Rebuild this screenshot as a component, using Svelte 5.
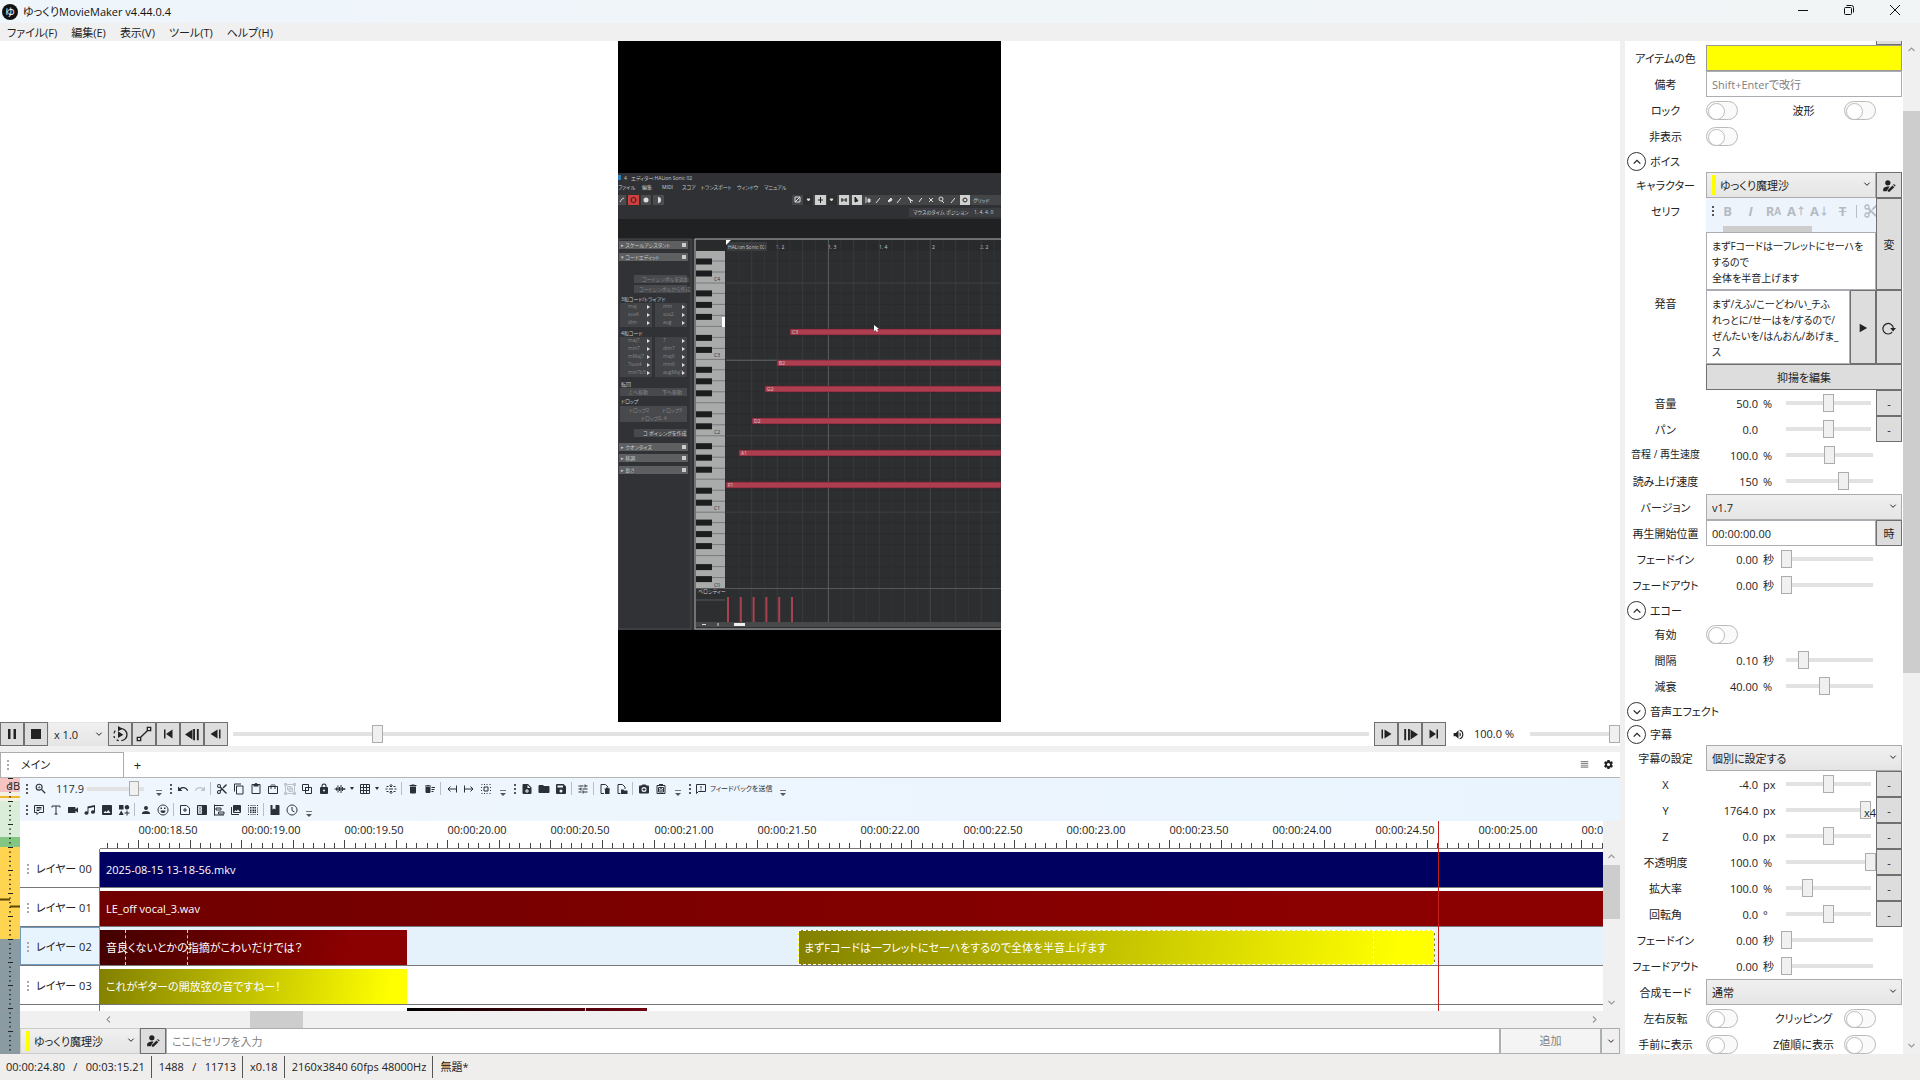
<script>
  const menus = ["ファイル(F)", "編集(E)", "表示(V)", "ツール(T)", "ヘルプ(H)"];

  // f: filled outline, s: stroked lines, both on a 24 unit grid
  const icons = {
    pause: { f: "M4 2h5v20H4zM15 2h5v20h-5z" },
    stop: { f: "M2 2h20v20H2z" },
    loop: {
      f: "M9 8l8 5-8 5zM9 0l7 4-7 4z",
      s: "M13 4a9 9 0 0 1 1 18M10 22a9 9 0 0 1-3-1.500M4 18a9 9 0 0 1-1-3M3 11a9 9 0 0 1 2-4",
    },
    path: { s: "M2 17h5v5H2zM17 2h5v5h-5zM7 17L17 7" },
    toStart: { f: "M4 3h3v18H4zM21 3v18L8 12z" },
    stepBack: { f: "M0 12l12-8v16zM13 3h3v18h-3zM19 3h3v18h-3z" },
    back: { f: "M1 12l14-9v18zM18 3h3v18h-3z" },
    forward: { f: "M23 12L9 3v18zM3 3h3v18H3z" },
    stepForward: { f: "M24 12l-12-8v16zM8 3h3v18H8zM2 3h3v18H2z" },
    toEnd: { f: "M17 3h3v18h-3zM3 3v18l13-9z" },
    volume: {
      f: "M3 9v6h4l5 5V4L7 9zm13.500 3A4.500 4.500 0 0 0 14 7.970v8.050A4.500 4.500 0 0 0 16.500 12zM14 3.230v2.060a7 7 0 0 1 0 13.420v2.060a9 9 0 0 0 0-17.540z",
    },
    play: { f: "M4 2v20l18-10z" },
    reload: { f: "M14 12h10l-5 6z", s: "M17.500 19a9 9 0 1 1 2-7" },
    person: {
      f: "M12 12a4 4 0 1 0 0-8 4 4 0 0 0 0 8zm0 2c-2.670 0-8 1.340-8 4v2h16v-2c0-2.660-5.330-4-8-4z",
    },
    editPerson: {
      f: "M10 11a4.500 4.500 0 1 0 0-9 4.500 4.500 0 0 0 0 9zM13 13c-4-1-11 .500-11 5v3h6zM10 22v-3l8-8 3 3-8 8zM19 10l1.500-1.500 3 3L22 13z",
    },
    gear: {
      f: "M12 15.500A3.500 3.500 0 1 1 12 8.500a3.500 3.500 0 0 1 0 7m7.430-2.530c.04-.32.07-.64.07-.97s-.03-.66-.07-1l2.110-1.630c.19-.15.24-.42.12-.64l-2-3.460c-.12-.22-.39-.31-.61-.22l-2.490 1c-.52-.39-1.060-.73-1.690-.98l-.37-2.650A.506.506 0 0 0 14 2h-4c-.25 0-.46.18-.5.42l-.37 2.650c-.63.25-1.170.59-1.690.98l-2.490-1c-.22-.09-.49 0-.61.22l-2 3.460c-.13.22-.07.49.12.64L4.570 11c-.04.34-.07.67-.07 1s.03.65.07.97l-2.110 1.660c-.19.15-.25.42-.12.64l2 3.460c.12.22.39.3.61.22l2.490-1.010c.52.4 1.060.74 1.690.99l.37 2.650c.04.24.25.42.5.42h4c.25 0 .46-.18.5-.42l.37-2.650c.63-.26 1.170-.59 1.690-.99l2.490 1.010c.22.08.49 0 .61-.22l2-3.460c.12-.22.07-.49-.12-.64z",
    },
    lines: { s: "M2 4h20M2 9h20M2 14h20M2 19h20" },
    zoom: {
      f: "M15.500 14h-.79l-.28-.27A6.470 6.470 0 0 0 16 9.500 6.500 6.500 0 1 0 9.500 16c1.610 0 3.090-.59 4.230-1.570l.27.28v.79l6 6L21.500 20zm-6 0a4.500 4.500 0 1 1 0-9 4.500 4.500 0 0 1 0 9zM12 10h-2v2H9v-2H7V9h2V7h1v2h2z",
    },
    undo: {
      f: "M12.500 8c-2.650 0-5.050.99-6.900 2.600L2 7v9h9l-3.620-3.620c1.390-1.160 3.160-1.880 5.120-1.880 3.540 0 6.550 2.310 7.600 5.500l2.370-.78C21.080 11.030 17.150 8 12.500 8z",
    },
    redo: {
      f: "M18.400 10.600C16.550 8.990 14.150 8 11.500 8c-4.650 0-8.580 3.030-9.960 7.220L3.900 16c1.050-3.190 4.050-5.500 7.600-5.500 1.950 0 3.730.72 5.120 1.880L13 16h9V7z",
    },
    cut: {
      f: "M9.640 7.640c.23-.5.36-1.050.36-1.640a4 4 0 1 0-4 4c.59 0 1.140-.13 1.640-.36L10 12l-2.360 2.360A4 4 0 1 0 10 18c0-.59-.13-1.140-.36-1.640L12 14l7 7h3v-1zM6 8a2 2 0 1 1 0-4 2 2 0 0 1 0 4zm0 12a2 2 0 1 1 0-4 2 2 0 0 1 0 4zM19 3l-6 6 2 2 7-7V3z",
    },
    copy: {
      f: "M16 1H4a2 2 0 0 0-2 2v14h2V3h12zm3 4H8a2 2 0 0 0-2 2v14a2 2 0 0 0 2 2h11a2 2 0 0 0 2-2V7a2 2 0 0 0-2-2zm0 16H8V7h11z",
    },
    paste: {
      f: "M19 2h-4.180a3 3 0 0 0-5.640 0H5a2 2 0 0 0-2 2v16a2 2 0 0 0 2 2h14a2 2 0 0 0 2-2V4a2 2 0 0 0-2-2zm0 18H5V4h2v3h10V4h2z",
    },
    pasteAttr: { s: "M3 7h18v14H3zM8 12V5l2-2 2 2 2-2 2 2v7M8 7h8" },
    group: { s: "M3 3h18v18H3zM1 1h4v4H1zM19 1h4v4h-4zM1 19h4v4H1zM19 19h4v4h-4zM7 7h7v7H7zM10 10h7v7h-7z" },
    ungroup: { s: "M3 3h12v12H3zM9 9h12v12H9zM9 9h6v6H9z" },
    lock: {
      f: "M18 8h-1V6A5 5 0 0 0 7 6v2H6a2 2 0 0 0-2 2v10a2 2 0 0 0 2 2h12a2 2 0 0 0 2-2V10a2 2 0 0 0-2-2zm-6 9a2 2 0 1 0 0-4 2 2 0 0 0 0 4zM9 8V6a3 3 0 0 1 6 0v2z",
    },
    wave: { s: "M1 12h22M5 9v6M8 5v14M11 8v8M14 4v16M17 8v8M20 10v4" },
    grid: { s: "M3 3h18v18H3zM9 3v18M15 3v18M3 9h18M3 15h18" },
    distribute: { s: "M12 2v5M9 5l3 3 3-3M12 22v-5M9 19l3-3 3 3M1 12h4M8 12h8M19 12h4M3 7h4M17 7h4M3 17h4M17 17h4" },
    trash: { f: "M6 19a2 2 0 0 0 2 2h8a2 2 0 0 0 2-2V7H6zM19 4h-3.500l-1-1h-5l-1 1H5v2h14z" },
    trashList: {
      f: "M15 16h4v2h-4zM15 8h7v2h-7zM15 12h6v2h-6zM3 18a2 2 0 0 0 2 2h6a2 2 0 0 0 2-2V8H3zM14 5h-3l-1-1H6L5 5H2v2h12z",
    },
    alignLeft: { s: "M21 12H4M9 7l-5 5 5 5M21 5v14" },
    alignRight: { s: "M3 12h17M15 7l5 5-5 5M3 5v14" },
    select: { s: "M8 8h8v8H8zM3 3h2M8 3h2M13 3h2M19 3h2M3 21h2M8 21h2M13 21h2M19 21h2M3 8v2M3 14v2M21 8v2M21 14v2" },
    fileAdd: { f: "M14 2H5a2 2 0 0 0-2 2v16a2 2 0 0 0 2 2h14a2 2 0 0 0 2-2V9zM13 4l6 6h-6zM11 12h2v3h3v2h-3v3h-2v-3H8v-2h3z" },
    folder: { f: "M10 4H3a2 2 0 0 0-2 2v12a2 2 0 0 0 2 2h18a2 2 0 0 0 2-2V8a2 2 0 0 0-2-2h-9z" },
    save: { f: "M17 2H4a2 2 0 0 0-2 2v16a2 2 0 0 0 2 2h16a2 2 0 0 0 2-2V7zM12 19a3 3 0 1 1 0-6 3 3 0 0 1 0 6zM16 9H5V5h11z" },
    tune: {
      f: "M3 17v2h6v-2zM3 5v2h10V5zm10 16v-2h8v-2h-8v-2h-2v6zM7 9v2H3v2h4v2h2V9zm14 4v-2H11v2zm-6-4h2V7h4V5h-4V3h-2z",
    },
    fileTrash: { f: "M11 11h11v2h-1v9h-9v-9h-1zM14 9h5v2h-5z", s: "M10 21H4V3h9l5 5" },
    fileLock: { f: "M10 13h5l1 2h7v7H10z", s: "M9 21H4V3h9l5 5v4" },
    camera: {
      f: "M9 3L7 5H4a2 2 0 0 0-2 2v12a2 2 0 0 0 2 2h16a2 2 0 0 0 2-2V7a2 2 0 0 0-2-2h-3l-2-2zM12 18a5 5 0 1 1 0-10 5 5 0 0 1 0 10zM11 10h2v2h2v2h-2v2h-2v-2H9v-2h2z",
    },
    cameraPaste: { f: "M8 2h8v4H8z", s: "M4 5h16v16H4zM7 9h10v9H7zM12 11a2.500 2.500 0 1 0 .1 0" },
    feedback: { s: "M3 3h18v14H7l-4 4zM12 6v5M12 13v2" },
    comment: { s: "M3 3h18v14H12l-4 4v-4H3zM7 7h10M7 10h10M7 13h6" },
    textTool: { s: "M4 7V4h16v3M12 4v17M9 20h6" },
    video: { f: "M17 10.500V7a1 1 0 0 0-1-1H3a1 1 0 0 0-1 1v10a1 1 0 0 0 1 1h13a1 1 0 0 0 1-1v-3.500l5 4v-11z" },
    music: { f: "M22 2v14a4 3.500 0 1 1-2-3V6L9 8.500V18a4 3.500 0 1 1-2-3V5z" },
    image: {
      f: "M22 20V4a2 2 0 0 0-2-2H4a2 2 0 0 0-2 2v16a2 2 0 0 0 2 2h16a2 2 0 0 0 2-2zM8.500 13.500l2.500 3 3.500-4.500 4.500 6H5z",
    },
    shapes: { f: "M2 2h9v9H2zM18 2a4.500 4.500 0 1 1-.1 0zM6.500 13l5 9h-10zM17 13h2v4h4v2h-4v4h-2v-4h-4v-2h4z" },
    smile: {
      f: "M7 13h10a5 5 0 0 1-10 0zM7 7h3v3H7zM14 7h3v3h-3z",
      s: "M12 2a10 10 0 1 0 .1 0",
    },
    frameAdd: { s: "M3 3h12l6 5v13H3zM12 8v8M8 12h8" },
    transition: {
      f: "M12 3h9v18h-9z",
      s: "M3 3h18v18H3zM5 6h2M9 6h2M7 9h2M5 12h2M9 12h2M7 15h2M5 18h2M9 18h2",
    },
    layersList: { s: "M3 1v22M3 3h18M6 8h10v4H6zM11 16h11v4H11zM3 22h19" },
    gallery: {
      f: "M22 16V4a2 2 0 0 0-2-2H8a2 2 0 0 0-2 2v12a2 2 0 0 0 2 2h12a2 2 0 0 0 2-2zm-11-4l2 2.700L16 11l4 5H8zM2 6v14a2 2 0 0 0 2 2h14v-2H4V6z",
    },
    dotGrid: {
      f: "M2 2h2v2H2zM7 2h2v2H7zM11 2h2v2h-2zM15 2h2v2h-2zM20 2h2v2h-2zM2 7h2v2H2zM6 6h3v3H6zM11 6h3v3h-3zM15 6h3v3h-3zM20 7h2v2h-2zM2 11h2v2H2zM6 11h3v3H6zM11 11h3v3h-3zM15 11h3v3h-3zM20 11h2v2h-2zM2 15h2v2H2zM6 15h3v3H6zM11 15h3v3h-3zM15 15h3v3h-3zM20 15h2v2h-2zM2 20h2v2H2zM7 20h2v2H7zM11 20h2v2h-2zM15 20h2v2h-2zM20 20h2v2h-2z",
    },
    book: { f: "M3 2h4v9l3-2 3 2V2h6a2 2 0 0 1 2 2v18H3z" },
    clock: { s: "M12 2a10 10 0 1 0 .1 0M12 6v7l5 3" },
    up: { s: "M4 16l8-8 8 8" },
    down: { s: "M4 8l8 8 8-8" },
    left: { s: "M16 4l-8 8 8 8" },
    right: { s: "M8 4l8 8-8 8" },
  };

  const editBar = [
    "grip", "undo", "redo:off", "|", "cut", "copy", "paste", "pasteAttr", "group:off", "ungroup",
    "lock", "wave:menu", "grid:menu", "distribute", "|", "trash", "trashList", "|", "alignLeft",
    "alignRight", "select", "more", "grip", "fileAdd", "folder", "save", "|", "tune", "|",
    "fileTrash", "fileLock", "|", "camera", "cameraPaste", "more", "grip",
  ];
  const itemBar = [
    "grip", "comment", "textTool", "video", "music", "image", "shapes", "|", "person", "smile",
    "|", "frameAdd", "transition", "layersList", "gallery", "dotGrid", "|", "book", "clock", "more",
  ];

  // timeline scale
  const stepWidth = 10.31;
  const firstLabel = 38;
  const ticks = Array.from({ length: 146 }, (_, i) => i - 3).map((k) => ({
    x: Math.round(firstLabel + k * stepWidth) + 0.5,
    major: k % 5 === 0,
    label: k % 10 === 0 ? `00:00:${(18.5 + k / 20).toFixed(2)}` : null,
  }));
  const playhead = 1338;

  const layers = [
    { name: "レイヤー 00", clips: [{ text: "2025-08-15 13-18-56.mkv", kind: "movie", x: 0, w: 4000 }] },
    { name: "レイヤー 01", clips: [{ text: "LE_off vocal_3.wav", kind: "audio", x: 0, w: 4000 }] },
    {
      name: "レイヤー 02",
      current: true,
      clips: [
        { text: "音良くないとかの指摘がこわいだけでは？", kind: "voice", x: 0, w: 307, marks: [25, 87] },
        {
          text: "まずFコードは一フレットにセーハをするので全体を半音上げます",
          kind: "line",
          x: 698,
          w: 637,
          marks: [574],
          picked: true,
        },
      ],
    },
    {
      name: "レイヤー 03",
      clips: [{ text: "これがギターの開放弦の音ですねー！", kind: "line", x: 0, w: 307 }],
    },
    { name: "", clips: [{ text: "", kind: "dark", x: 307, w: 240, marks: [178] }] },
  ];

  const voiceSliders = [
    { label: "音量", value: "50.0", unit: "%", pos: 0.5, key: true },
    { label: "パン", value: "0.0", unit: "", pos: 0.5, key: true },
    { label: "音程 / 再生速度", value: "100.0", unit: "%", pos: 0.5, small: true },
    { label: "読み上げ速度", value: "150", unit: "%", pos: 0.66 },
  ];
  const voiceFades = [
    { label: "フェードイン", value: "0.00", unit: "秒", pos: 0 },
    { label: "フェードアウト", value: "0.00", unit: "秒", pos: 0 },
  ];
  const echoSliders = [
    { label: "間隔", value: "0.10", unit: "秒", pos: 0.2 },
    { label: "減衰", value: "40.00", unit: "%", pos: 0.44 },
  ];
  const captionSliders = [
    { label: "X", value: "-4.0", unit: "px", pos: 0.5, key: true },
    { label: "Y", value: "1764.0", unit: "px", pos: 0.94, key: true, badge: "x4" },
    { label: "Z", value: "0.0", unit: "px", pos: 0.5, key: true },
    { label: "不透明度", value: "100.0", unit: "%", pos: 1, key: true },
    { label: "拡大率", value: "100.0", unit: "%", pos: 0.25, key: true },
    { label: "回転角", value: "0.0", unit: "°", pos: 0.5, key: true },
    { label: "フェードイン", value: "0.00", unit: "秒", pos: 0 },
    { label: "フェードアウト", value: "0.00", unit: "秒", pos: 0 },
  ];

  let serif = $state("まずFコードは一フレットにセーハを\nするので\n全体を半音上げます");
  let reading = $state("まず/えふ/こーどわ/い_チふ\nれっとに/せーはを/するので/\nぜんたいを/はんおん/あげま_\nス");

  // preview frame
  const notes = [
    { x: 790, y: 332, n: "C3" },
    { x: 777, y: 363, n: "B2" },
    { x: 765, y: 389, n: "G2" },
    { x: 752, y: 421, n: "D2" },
    { x: 739, y: 453, n: "A1" },
    { x: 726, y: 485, n: "F1" },
  ];
  const octaves = [283, 359.4, 435.8, 512.2, 588.6];
  const blackKeys = [9.5, 21.5, 42.5, 54.5, 66];
  const chordRows = [
    [307, "maj", "min"], [315, "sus4", "sus2"], [323, "dim", "aug"],
    [341, "maj7", "7"], [349, "min7", "dim7"], [357, "mMaj7", "maj6"],
    [365, "7sus4", "min6"], [373, "min7b5", "augMaj7"],
  ];
  const panelBars = [
    [241, "▸ スケールアシスタント"], [253, "▾ コードエディット"],
    [443, "▸ クオンタイズ"], [454, "▸ 移調"], [466, "▸ 長さ"],
  ];
</script>

{#snippet icon(name, size = 12)}
  <svg class="icon" width={size} height={size} viewBox="0 0 24 24" aria-hidden="true">
    {#if icons[name].f}<path d={icons[name].f} fill="currentColor" fill-rule="evenodd" />{/if}
    {#if icons[name].s}
      <path d={icons[name].s} fill="none" stroke="currentColor" stroke-width={size < 11 ? 3 : 2} />
    {/if}
  </svg>
{/snippet}

{#snippet bar(items)}
  {#each items as item}
    {@const [name, mode] = item.split(":")}
    {#if name === "grip"}
      <span class="grip"></span>
    {:else if name === "|"}
      <span class="sep"></span>
    {:else if name === "more"}
      <button class="more" aria-label="その他"></button>
    {:else}
      <button class="tool" class:menu={mode === "menu"} disabled={mode === "off"} aria-label={name}>
        {@render icon(name)}
      </button>
    {/if}
  {/each}
{/snippet}

{#snippet combo(id, text, color)}
  <span class="combo" class:colored={color}>
    <select {id} aria-label={text}>
      <option>{text}</option>
    </select>
    {@render icon("down", 8)}
  </span>
{/snippet}

{#snippet sliders(rows, prefix)}
  {#each rows as row, i}
    <div class="row">
      <label for={`${prefix}${i}`} class:small={row.small}>{row.label}</label>
      <div class="slider-row" class:keyed={row.key}>
        <span class="value">{row.value}</span>
        <span class="unit">{row.unit}</span>
        <input id={`${prefix}${i}`} type="range" min="0" max="1" step="0.01" value={row.pos} />
        {#if row.badge}<span class="badge">{row.badge}</span>{/if}
        {#if row.key}<button class="btn" aria-label={`${row.label} アニメーション`}>-</button>{/if}
      </div>
    </div>
  {/each}
{/snippet}

{#snippet toggles(id, items)}
  <div class="row double">
    {#each items as item, i}
      <label for={`${id}${i}`}>{item}</label>
      <span class="cell"><input id={`${id}${i}`} class="toggle" type="checkbox" /></span>
    {/each}
  </div>
{/snippet}

{#snippet heading(text, name)}
  <button class="heading"><span class="ring">{@render icon(name, 10)}</span>{text}</button>
{/snippet}

<div class="window">
  <header>
    <div class="title">
      <span class="logo">ゆ</span>
      <h1>ゆっくりMovieMaker v4.44.0.4</h1>
      <div class="caption">
        <button aria-label="最小化"><svg width="10" height="10"><path d="M0 5.5h10" /></svg></button>
        <button aria-label="元に戻す">
          <svg width="10" height="10"><rect x="0.5" y="2.500" width="7" height="7" rx="1" /><path d="M2.500 0.5h5a2 2 0 0 1 2 2v5" /></svg>
        </button>
        <button aria-label="閉じる"><svg width="10" height="10"><path d="M0 0l10 10M10 0L0 10" /></svg></button>
      </div>
    </div>
    <nav>
      {#each menus as menu}
        <button>{menu}</button>
      {/each}
    </nav>
  </header>

  <main>
    <section class="left">
      <div class="preview">
        <svg class="video" viewBox="618 41 383 681" role="img" aria-label="プレビュー">
          <rect x="618" y="41" width="383" height="681" fill="#000" />
          <rect x="618" y="173" width="383" height="457" fill="#2f3134" />
          <rect x="618" y="219" width="383" height="20" fill="#202123" />
          <rect x="618" y="175" width="3" height="5" fill="#2b7fb5" />
          <g class="tiny">
            <text x="624" y="180">4</text>
            <text x="631" y="180">エディター</text>
            <text x="652" y="180">: HALion Sonic 02</text>
            <text x="618" y="189">ファイル</text>
            <text x="642" y="189">編集</text>
            <text x="662" y="189">MIDI</text>
            <text x="682" y="189">スコア</text>
            <text x="701" y="189">トランスポート</text>
            <text x="737" y="189">ウィンドウ</text>
            <text x="764" y="189">マニュアル</text>
          </g>
          <rect x="618" y="195" width="8" height="10" fill="#4a4c4e" />
          <path d="M620 202l2-3 2-1" stroke="#ddd" />
          <rect x="628" y="195" width="11" height="10" fill="#c9403f" />
          <circle cx="633.5" cy="200" r="2.500" fill="none" stroke="#401515" />
          <rect x="641" y="195" width="10" height="10" fill="#4a4c4e" />
          <circle cx="646" cy="200" r="2.500" fill="#ddd" />
          <rect x="653" y="195" width="11" height="10" fill="#4a4c4e" />
          <path d="M658 197a3 3 0 1 1 0 6z" fill="#ddd" />
          <rect x="792" y="195" width="209" height="10" fill="#434547" />
          <rect x="803" y="195" width="10" height="10" fill="#2c2e30" />
          <rect x="827" y="195" width="10" height="10" fill="#2c2e30" />
          <rect x="815" y="195" width="11" height="10" fill="#d0d0d0" />
          <rect x="839" y="195" width="10" height="10" fill="#d0d0d0" />
          <rect x="852" y="195" width="10" height="10" fill="#d0d0d0" />
          <rect x="960" y="195" width="10" height="10" fill="#d0d0d0" />
          <g fill="#ddd" stroke="#ddd">
            <path d="M795 197h5v5h-5zM795 202l5-5" fill="none" />
            <path d="M807 199h3l-1.500 2zM830 199h3l-1.500 2z" />
            <path d="M866 197v6M868 199h2v3h-2zM876 203l4-5M888 201l3-3 1 2-3 2zM897 203l4-5M908 197l2 3 3 1M910 200l1 3M919 202l2-3 1-1M929 198l4 4M933 198l-4 4M955 198l-4 5" />
            <circle cx="941" cy="199" r="2" fill="none" />
            <path d="M942 201l2 2" />
          </g>
          <g fill="#222" stroke="#222">
            <path d="M818 200h5M820.500 197v6M841 200h6M842 198v4M846 198v4" />
            <path d="M855 197v5l2-1h1z" />
            <circle cx="965" cy="200" r="2" fill="none" />
          </g>
          <text class="tiny" x="973" y="202">グリッド</text>
          <rect x="909" y="208" width="92" height="9" fill="#3b3d40" />
          <text class="tiny" x="913" y="214">マウスのタイム ポジション</text>
          <text class="tiny" x="974" y="214">1. 4. 4. 0</text>

          <rect x="618" y="239" width="73" height="390" fill="#303235" stroke="#4b4d50" />
          {#each panelBars as [y, text]}
            <rect x="619" {y} width="69" height="8" fill="#5d5f61" />
            <text class="tiny" x="621" y={y + 6}>{text}</text>
            <rect x="682" y={y + 2} width="4" height="4" fill="#ccc" />
          {/each}
          <g fill="#48494c">
            <rect x="634" y="275" width="53" height="8" />
            <rect x="634" y="285" width="53" height="8" />
            <rect x="620" y="388" width="67" height="8" />
            <rect x="620" y="406" width="67" height="16" />
            <rect x="634" y="429" width="53" height="8" />
          </g>
          {#each chordRows as [y, a, b]}
            <rect x="620" y={y - 4} width="32" height="8" fill="#414346" />
            <rect x="655" y={y - 4} width="32" height="8" fill="#414346" />
            <text class="tiny dim" x="628" y={y + 1}>{a}</text>
            <text class="tiny dim" x="663" y={y + 1}>{b}</text>
            <path d={`M647 ${y - 2}v4l3-2zM682 ${y - 2}v4l3-2z`} fill="#ddd" />
          {/each}
          <g class="tiny">
            <text x="621" y="301">3和コード/トライアド</text>
            <text x="621" y="335">4和コード</text>
            <text x="621" y="386">転回</text>
            <text x="621" y="403">ドロップ</text>
            <text class="dim" x="642" y="281">コードシンボルを追加</text>
            <text class="dim" x="639" y="291">コードシンボルから作成</text>
            <text class="dim" x="628" y="394">上へ移動</text>
            <text class="dim" x="662" y="394">下へ移動</text>
            <text class="dim" x="629" y="412">ドロップ2</text>
            <text class="dim" x="662" y="412">ドロップ3</text>
            <text class="dim" x="641" y="420">ドロップ2, 4</text>
            <text x="643" y="435">コ ボイシングを作成</text>
          </g>

          <rect x="695" y="239" width="310" height="390" fill="#2c2e30" stroke="#b5b5b5" />
          <rect x="696" y="240" width="305" height="11" fill="#282a2c" />
          <rect x="727" y="242" width="40" height="9" fill="#3a3c3e" />
          <path d="M726 240h5l-5 5z" fill="#fff" />
          <g class="tiny">
            <text x="728" y="249">HALion Sonic 02</text>
            <text x="776" y="249">1. 2</text>
            <text x="828" y="249">1. 3</text>
            <text x="879" y="249">1. 4</text>
            <text x="932" y="249">2</text>
            <text x="980" y="249">2. 2</text>
          </g>
          <rect x="696" y="251" width="29" height="337" fill="#a9abaa" />
          {#each octaves as bottom, o}
            <text class="tiny key" x="714" y={bottom - 2}>C{4 - o}</text>
            {#each [0, 11, 22, 33, 44, 55, 66] as step}
              {#if bottom - step > 252}
                <path d={`M696 ${bottom - step}h29`} stroke="#55585a" stroke-width="0.6" />
                <path d={`M726 ${bottom - step}h275`} stroke={step ? "#292b2d" : "#3e4042"} />
              {/if}
            {/each}
            {#each blackKeys as k}
              {#if bottom - k > 252}
                <rect x="696" y={bottom - k - 3} width="16" height="6" fill="#1c1d1e" />
              {/if}
            {/each}
          {/each}
          <rect x="722" y="317" width="3" height="10" fill="#fff" />
          {#each Array(21) as _, i}
            {@const x = 739 + i * 12.75}
            <path d={`M${x} 240V622`} stroke={i % 8 === 7 ? "#505355" : i % 2 ? "#404244" : "#353739"} stroke-width="0.7" />
          {/each}
          <path d="M828.500 240V622" stroke="#606365" stroke-width="0.7" />
          <path d="M726 360.500h51M696 588.500h305M696 600h29" stroke="#55585a" />
          <text class="tiny" x="698" y="593">ベロシティー</text>
          {#each notes as note, i}
            <rect x={note.x} y={note.y - 3} width={1001 - note.x} height="6" fill="#ad3e50" stroke="#5a1c28" stroke-width="0.6" />
            <text class="tiny" x={note.x + 2} y={note.y + 1.5}>{note.n}</text>
            <rect x={791 - i * 12.8} y="597" width="2" height="25" fill="#a9414f" />
          {/each}
          <rect x="696" y="622" width="305" height="5" fill="#46484a" />
          <path d="M702 624.500h4M718 623v3" stroke="#ddd" />
          <rect x="734" y="623" width="11" height="3" fill="#eee" />
          <path d="M874 325v6l1.500-1 1.500 2 1-1-1-2h2z" fill="#fff" />
        </svg>
      </div>

      <div class="transport">
        <button class="btn" aria-label="一時停止">{@render icon("pause")}</button>
        <button class="btn" aria-label="停止">{@render icon("stop")}</button>
        <span class="speed">{@render combo("speed", "x 1.0")}</span>
        <button class="btn" aria-label="ループ">{@render icon("loop", 16)}</button>
        <button class="btn" aria-label="パス">{@render icon("path", 16)}</button>
        <button class="btn" aria-label="先頭">{@render icon("toStart")}</button>
        <button class="btn" aria-label="前へ">{@render icon("stepBack", 15)}</button>
        <button class="btn" aria-label="戻る">{@render icon("back")}</button>
        <input class="seek" type="range" min="0" max="11713" value="1488" aria-label="シーク" />
        <button class="btn" aria-label="進む">{@render icon("forward")}</button>
        <button class="btn" aria-label="次へ">{@render icon("stepForward", 15)}</button>
        <button class="btn" aria-label="末尾">{@render icon("toEnd")}</button>
        <label class="volume" for="volume">{@render icon("volume", 13)}<span>100.0 %</span></label>
        <input id="volume" type="range" min="0" max="100" value="100" />
      </div>

      <div class="tabs">
        <button class="tab"><span class="grip"></span>メイン</button>
        <button class="plain add" aria-label="追加">+</button>
        <button class="plain faint" aria-label="一覧">{@render icon("lines", 9)}</button>
        <button class="plain" aria-label="設定">{@render icon("gear", 11)}</button>
      </div>

      <div class="editor">
        <div class="meter">
          <span class="db">dB</span>
          <svg viewBox="0 0 20 276" preserveAspectRatio="none" aria-hidden="true">
            {#each Array(60) as _, i}
              <path d={i % 5 === 0 ? `M8 ${i * 4.6 + 0.5}h5` : `M9 ${i * 4.6 + 0.5}h2`} stroke="#222" />
            {/each}
            <path d="M0 121.500h10M10 128.500h10" stroke="#5d4700" stroke-width="2" />
          </svg>
        </div>
        <div class="timeline">
          <div class="toolbars">
            <div class="toolbar">
              <span class="grip"></span>
              <label class="zoom" for="zoom">{@render icon("zoom", 13)}<span>117.9</span></label>
              <input id="zoom" type="range" min="0" max="100" value="82" />
              <button class="more" aria-label="その他"></button>
              {@render bar(editBar)}
              <button class="feedback">{@render icon("feedback")}フィードバックを送信</button>
              <button class="more" aria-label="その他"></button>
            </div>
            <div class="toolbar">{@render bar(itemBar)}</div>
          </div>

          <div class="tracks">
            <div class="lanes">
              <svg class="ruler" aria-label="時間">
                {#each ticks as tick}
                  <path d={`M${tick.x} ${tick.major ? 19 : 22}V27`} stroke="#444" />
                  {#if tick.label}<text x={tick.x} y="13">{tick.label}</text>{/if}
                {/each}
              </svg>
              {#each layers as layer}
                <div class="layer" class:current={layer.current}>
                  <div class="name">{#if layer.name}<span class="grip"></span>{layer.name}{/if}</div>
                  <div class="lane">
                    {#each layer.clips as clip}
                      <div class={`clip ${clip.kind}`} class:picked={clip.picked} style={`left:${clip.x}px;width:${clip.w}px`}>
                        {clip.text}
                        {#each clip.marks || [] as mark}
                          <i style={`left:${mark}px`}></i>
                        {/each}
                      </div>
                    {/each}
                  </div>
                </div>
              {/each}
              <div class="playhead" style={`left:${80 + playhead}px`}></div>
            </div>
            <div class="vscroll">
              <button aria-label="上へ">{@render icon("up", 9)}</button>
              <span class="thumb"></span>
              <button aria-label="下へ">{@render icon("down", 9)}</button>
            </div>
          </div>
          <div class="hscroll">
            <button aria-label="左へ">{@render icon("left", 9)}</button>
            <span class="thumb"></span>
            <button aria-label="右へ">{@render icon("right", 9)}</button>
          </div>

          <div class="entry">
            <span class="who">{@render combo("who", "ゆっくり魔理沙", true)}</span>
            <button class="btn" aria-label="キャラクター編集">{@render icon("editPerson", 14)}</button>
            <input type="text" placeholder="ここにセリフを入力" aria-label="セリフ" />
            <button class="submit" disabled>追加</button>
            <button class="drop" aria-label="追加方法">{@render icon("down", 8)}</button>
          </div>
        </div>
      </div>
    </section>

    <aside>
      <form class="props" onsubmit={(e) => e.preventDefault()}>
        <div class="cutoff"><button class="btn" aria-label="色"></button></div>
        <div class="row">
          <span class="label">アイテムの色</span>
          <button class="swatch" aria-label="アイテムの色"></button>
        </div>
        <div class="row">
          <label for="memo">備考</label>
          <input id="memo" type="text" placeholder="Shift+Enterで改行" />
        </div>
        {@render toggles("lock", ["ロック", "波形"])}
        {@render toggles("hide", ["非表示"])}

        {@render heading("ボイス", "up")}
        <div class="row">
          <label for="chara">キャラクター</label>
          <div class="pair">
            {@render combo("chara", "ゆっくり魔理沙", true)}
            <button class="btn" aria-label="キャラクター編集">{@render icon("editPerson", 14)}</button>
          </div>
        </div>
        <div class="row">
          <label for="serif">セリフ</label>
          <div class="pair">
            <div class="serif">
              <div class="format">
                <div class="letters">
                  <span class="grip"></span>
                  <button disabled>B</button>
                  <button disabled><em>I</em></button>
                  <button disabled>R<sub>A</sub></button>
                  <button disabled>A<small>↑</small></button>
                  <button disabled>A<small>↓</small></button>
                  <button disabled><s>T</s></button>
                  <span class="sep"></span>
                  <button disabled aria-label="切り取り">{@render icon("cut", 16)}</button>
                </div>
                <span class="thumb"></span>
              </div>
              <textarea id="serif" rows="3" bind:value={serif}></textarea>
            </div>
            <button class="btn">変</button>
          </div>
        </div>
        <div class="row">
          <label for="reading">発音</label>
          <div class="pair">
            <textarea id="reading" class="reading" rows="4" bind:value={reading}></textarea>
            <button class="btn" aria-label="再生">{@render icon("play", 10)}</button>
            <button class="btn" aria-label="更新">{@render icon("reload", 14)}</button>
          </div>
        </div>
        <div class="row">
          <span></span>
          <button class="btn">抑揚を編集</button>
        </div>
        {@render sliders(voiceSliders, "voice")}
        <div class="row">
          <label for="version">バージョン</label>
          {@render combo("version", "v1.7")}
        </div>
        <div class="row">
          <label for="start">再生開始位置</label>
          <div class="pair">
            <input id="start" type="text" value="00:00:00.00" />
            <button class="btn">時</button>
          </div>
        </div>
        {@render sliders(voiceFades, "vfade")}

        {@render heading("エコー", "up")}
        {@render toggles("echo", ["有効"])}
        {@render sliders(echoSliders, "delay")}

        {@render heading("音声エフェクト", "down")}
        {@render heading("字幕", "up")}
        <div class="row">
          <label for="captions">字幕の設定</label>
          {@render combo("captions", "個別に設定する")}
        </div>
        {@render sliders(captionSliders, "cap")}
        <div class="row">
          <label for="blend">合成モード</label>
          {@render combo("blend", "通常")}
        </div>
        {@render toggles("flip", ["左右反転", "クリッピング"])}
        {@render toggles("front", ["手前に表示", "Z値順に表示"])}
      </form>
      <div class="vscroll side">
        <button aria-label="上へ">{@render icon("up", 9)}</button>
        <span class="thumb"></span>
        <button aria-label="下へ">{@render icon("down", 9)}</button>
      </div>
    </aside>
  </main>

  <footer>
    <span>00:00:24.80&ensp; / &ensp;00:03:15.21</span>
    <span>1488&ensp; / &ensp;11713</span>
    <span>x0.18</span>
    <span>2160x3840 60fps 48000Hz</span>
    <span>無題*</span>
  </footer>
</div>

<style>
  :global(body) {
    margin: 0;
    overflow: hidden;
  }

  .window {
    background: #f0f0f0;
    color: #222;
    display: flex;
    flex-direction: column;
    font-family: "Open Sans", "Noto Sans CJK JP", sans-serif;
    font-feature-settings: "palt";
    font-size: 11px;
    height: 100vh;
    line-height: 16px;
  }

  .window * {
    box-sizing: border-box;
  }

  button,
  input,
  select,
  textarea {
    border: 0;
    border-radius: 0;
    color: inherit;
    font: inherit;
    font-feature-settings: inherit;
    margin: 0;
    min-width: 0;
    outline: 0;
    padding: 0;
  }

  button {
    align-items: center;
    background: none;
    display: flex;
    justify-content: center;
    white-space: nowrap;
  }

  .icon {
    display: block;
    flex: none;
  }

  /* title and menu */
  .title {
    align-items: center;
    background: linear-gradient(90deg, #eef5fb, #f2f5f6);
    display: flex;
    height: 23px;
    padding-left: 2px;
  }

  .logo {
    background: #111;
    border-radius: 50%;
    color: #fff;
    font-size: 10px;
    height: 16px;
    text-align: center;
    width: 16px;
  }

  h1 {
    color: #111;
    flex: 1;
    font-size: 11px;
    font-weight: 400;
    margin: 0 0 0 5px;
  }

  .caption {
    display: flex;
    padding-right: 2px;
  }

  .caption button {
    height: 23px;
    padding-bottom: 3px;
    width: 46px;
  }

  .caption svg {
    fill: none;
    stroke: #111;
  }

  nav {
    display: flex;
    gap: 14px;
    height: 18px;
    padding: 1px 0 0 7px;
  }

  main {
    display: flex;
    flex: 1;
    min-height: 0;
  }

  .left {
    background: #fff;
    display: flex;
    flex: 1;
    flex-direction: column;
    min-width: 0;
  }

  .preview {
    display: flex;
    flex: 1;
    justify-content: center;
    min-height: 0;
    padding-right: 1px;
  }

  .video {
    height: 100%;
  }

  .tiny,
  .tiny text {
    fill: #ccc;
    font-size: 5px;
  }

  .tiny .dim,
  .tiny.dim {
    fill: #85878a;
  }

  .tiny.key {
    fill: #333;
  }

  .btn {
    background: #ddd;
    border: 1px solid #707070;
    color: #222;
    flex: none;
    width: 26px;
  }

  /* slider */
  input[type="range"] {
    appearance: none;
    background: linear-gradient(#e2e2e2, #e2e2e2) no-repeat center / calc(100% - 10px) 4px;
    height: 18px;
  }

  input[type="range"]::-webkit-slider-thumb {
    appearance: none;
    background: #f0f0f0;
    border: 1px solid #acacac;
    height: 18px;
    width: 11px;
  }

  .combo {
    background: linear-gradient(#f0f0f0, #e5e5e5);
    border: 1px solid #acacac;
    display: flex;
    flex: 1;
    min-width: 0;
    position: relative;
  }

  .combo select {
    appearance: none;
    background: none;
    flex: 1;
    padding: 1px 0 0 5px;
  }

  .combo .icon {
    pointer-events: none;
    position: absolute;
    right: 4px;
    top: 7px;
  }

  .combo.colored select {
    padding-left: 13px;
  }

  .combo.colored::before {
    background: #ff0;
    bottom: 2px;
    content: "";
    left: 5px;
    position: absolute;
    top: 2px;
    width: 4px;
  }

  .transport {
    display: flex;
    height: 24px;
  }

  .transport .btn {
    width: 24px;
  }

  .transport input {
    align-self: center;
    width: 95px;
  }

  .transport .seek {
    flex: 1;
  }

  .speed {
    display: flex;
    width: 60px;
  }

  .speed .combo {
    border-color: #e5e5e5;
  }

  .volume {
    align-items: center;
    display: flex;
    gap: 9px;
    padding-left: 6px;
    width: 79px;
  }

  .tabs {
    border-bottom: 1px solid #b5b5b5;
    border-top: 6px solid #f0f0f0;
    display: flex;
    height: 32px;
  }

  .tab {
    border: 1px solid #acacac;
    border-bottom: 0;
    gap: 10px;
    justify-content: flex-start;
    padding-left: 3px;
    width: 124px;
  }

  .plain {
    width: 24px;
  }

  .add {
    font-size: 13px;
    margin-right: auto;
    width: 27px;
  }

  .faint {
    color: #888;
  }

  .grip {
    align-self: center;
    background: radial-gradient(circle, #555 1px, transparent 1px) center / 2px 4px repeat-y;
    flex: none;
    height: 12px;
    width: 7px;
  }

  .tab .grip,
  .name .grip {
    background-image: radial-gradient(circle, #aaa 1px, transparent 1px);
  }

  .editor {
    display: flex;
  }

  .meter {
    background: linear-gradient(
      #f6c3c3 14px,
      #f5f0e4 14px 18px,
      #f0b92c 18px 20px,
      #f5f0e4 20px 23px,
      #d9edd9 23px 59px,
      #83c683 59px 69px,
      #ffd451 69px 161px,
      #8a9ba1 161px
    );
    position: relative;
    width: 20px;
  }

  .meter svg {
    height: 100%;
    position: absolute;
    width: 20px;
  }

  .db {
    position: absolute;
    right: 0;
  }

  .timeline {
    flex: 1;
    min-width: 0;
  }

  .toolbars {
    background: linear-gradient(90deg, #f0f6fd, #e9f4fe);
    padding: 0 0 1px 3px;
  }

  .toolbar {
    color: #2b3036;
    display: flex;
    height: 21px;
  }

  .tool {
    flex: none;
    width: 17px;
  }

  .tool:disabled {
    color: #bcc3ca;
  }

  .tool.menu {
    gap: 4px;
    justify-content: flex-start;
    padding-left: 2px;
    width: 25px;
  }

  .tool.menu::after {
    border: 2px solid transparent;
    border-bottom: 0;
    border-top: 3px solid currentColor;
    content: "";
  }

  .sep {
    align-self: center;
    border-left: 1px solid #b9bfc6;
    flex: none;
    height: 13px;
    margin: 0 2px;
  }

  .more {
    align-items: flex-end;
    flex: none;
    padding-bottom: 3px;
    width: 17px;
  }

  .more::after {
    border: 3px solid transparent;
    border-bottom: 0;
    border-top-color: #555;
    content: "";
  }

  .more::before {
    background: #777;
    content: "";
    height: 1px;
    margin: 0 -6px 5px 0;
    width: 6px;
  }

  .zoom {
    align-items: center;
    display: flex;
    gap: 9px;
    padding-left: 4px;
    width: 52px;
  }

  .toolbar input {
    align-self: center;
    height: 15px;
    margin-right: 1px;
    width: 67px;
  }

  .toolbar input::-webkit-slider-thumb {
    height: 15px;
    width: 10px;
  }

  .feedback {
    font-size: 7px;
    gap: 3px;
    padding: 0 2px;
  }

  .tracks {
    display: flex;
    height: 190px;
  }

  .lanes {
    background: #fff;
    display: flex;
    flex: 1;
    flex-direction: column;
    min-width: 0;
    overflow: hidden;
    position: relative;
  }

  .ruler {
    border-bottom: 1px solid #777;
    flex: none;
    height: 28px;
    margin-left: 80px;
    width: calc(100% - 80px);
  }

  .ruler text {
    fill: #222;
  }

  .layer {
    border-bottom: 1px solid #777;
    display: flex;
    flex: none;
    height: 39px;
  }

  .name {
    align-items: center;
    border-right: 1px solid #777;
    display: flex;
    flex: none;
    gap: 5px;
    padding: 1px 0 0 4px;
    width: 80px;
  }

  .current .name {
    background: #e8f4fd;
    outline: 1px solid #6f9cc0;
    outline-offset: -1px;
  }

  .current .lane {
    background: #e5f1fb;
  }

  .lane {
    flex: 1;
    overflow: hidden;
    position: relative;
  }

  .clip {
    bottom: 0;
    color: #fff;
    line-height: 35px;
    overflow: hidden;
    padding-left: 6px;
    position: absolute;
    top: 3px;
    white-space: nowrap;
  }

  .clip i {
    border-left: 1px dashed #fffc;
    bottom: 0;
    position: absolute;
    top: 0;
  }

  .movie {
    background: #000060;
  }

  .audio {
    background: linear-gradient(90deg, #700000, #8b0000 1200px);
  }

  .voice {
    background: linear-gradient(100deg, #430000, #8b0000 80%);
  }

  .line {
    background: linear-gradient(100deg, #828000, #ff0 94%);
  }

  .dark {
    background: linear-gradient(90deg, #000, #700010);
  }

  .picked {
    border: 1px dashed #fff;
    line-height: 33px;
    padding-left: 5px;
  }

  .playhead {
    border-left: 1px solid #c32020;
    bottom: 0;
    position: absolute;
    top: 0;
  }

  .vscroll {
    background: #f0f0f0;
    color: #999;
    display: flex;
    flex: none;
    flex-direction: column;
    padding-top: 27px;
    width: 17px;
  }

  .vscroll button {
    height: 17px;
  }

  .thumb {
    background: #cdcdcd;
    display: block;
  }

  .vscroll .thumb {
    height: 54px;
    margin-bottom: auto;
  }

  .hscroll {
    background: #f0f0f0;
    color: #999;
    display: flex;
    height: 17px;
    padding: 0 17px 0 80px;
  }

  .hscroll button {
    width: 17px;
  }

  .hscroll .thumb {
    margin-left: 133px;
    margin-right: auto;
    width: 53px;
  }

  .entry {
    display: flex;
    height: 26px;
  }

  .who {
    display: flex;
    width: 120px;
  }

  .who .combo {
    border-color: #ccc;
  }

  input[type="text"],
  textarea {
    background: #fff;
    border: 1px solid #abadb3;
    flex: 1;
    padding: 1px 5px 0;
  }

  input::placeholder {
    color: #808080;
  }

  .submit {
    background: #f4f4f4;
    border: 1px solid #adb2b5;
    color: #838383;
    width: 101px;
  }

  .drop {
    background: #f0f0f0;
    border: 1px solid #acacac;
    width: 19px;
  }

  /* item properties */
  aside {
    display: flex;
    flex: none;
    width: 300px;
  }

  .props {
    background: #fff;
    flex: 1;
    margin-left: 5px;
    min-width: 0;
    overflow: hidden;
    padding-right: 1px;
  }

  .cutoff {
    display: flex;
    height: 4px;
    justify-content: flex-end;
  }

  .cutoff .btn {
    border-top: 0;
  }

  .row {
    display: grid;
    grid-template-columns: 81px 1fr;
    min-height: 26px;
  }

  .row.double {
    grid-template-columns: 81px 57px 81px 1fr;
  }

  .row label,
  .label {
    line-height: 24px;
    padding-top: 2px;
    text-align: center;
    white-space: nowrap;
  }

  .row .small {
    font-size: 10px;
    line-height: 20px;
  }

  .row .btn {
    padding-top: 1px;
    width: auto;
  }

  .pair .btn,
  .slider-row .btn {
    width: 26px;
  }

  .cell {
    align-items: center;
    display: flex;
  }

  .toggle {
    appearance: none;
    background: #fafafa;
    border: 1px solid #bbb;
    border-radius: 10px;
    display: flex;
    height: 19px;
    padding: 1px;
    width: 32px;
  }

  .toggle::before {
    background: #fff;
    border: 1px solid #bbb;
    border-radius: 50%;
    content: "";
    height: 15px;
    width: 15px;
  }

  .toggle:checked {
    justify-content: flex-end;
  }

  .swatch {
    background: #ff0;
    border: 1px solid #999;
  }

  .heading {
    gap: 4px;
    height: 23px;
    padding: 2px 0 0 2px;
  }

  .ring {
    align-items: center;
    border: 1px solid #333;
    border-radius: 50%;
    display: flex;
    height: 19px;
    justify-content: center;
    width: 19px;
  }

  .pair {
    display: flex;
    min-width: 0;
  }

  .serif {
    display: flex;
    flex: 1;
    flex-direction: column;
    min-width: 0;
  }

  .format {
    background: #edf4fc;
    height: 34px;
    overflow: hidden;
  }

  .format .thumb {
    height: 6px;
    margin: 2px 64px 0 17px;
  }

  .letters {
    display: flex;
    font-size: 13px;
    font-weight: 700;
    height: 26px;
    padding-left: 3px;
  }

  .letters button {
    color: #b4bbc3;
    flex: none;
    width: 23px;
  }

  .letters sub,
  .letters small {
    font-size: 10px;
  }

  textarea {
    display: block;
    flex: none;
    font-size: 10px;
    height: 58px;
    overflow: hidden;
    padding-top: 5px;
    resize: none;
    white-space: pre;
  }

  .reading {
    flex: 1;
    height: 74px;
  }

  .slider-row {
    align-items: center;
    display: grid;
    grid-template-columns: 52px 23px 1fr;
    padding-right: 24px;
    position: relative;
  }

  .slider-row.keyed {
    grid-template-columns: 52px 23px 1fr 26px;
    padding-right: 0;
  }

  .slider-row .btn {
    height: 26px;
  }

  .value,
  .unit {
    line-height: 14px;
    padding-top: 2px;
  }

  .value {
    text-align: right;
  }

  .unit {
    padding-left: 5px;
  }

  .slider-row input {
    width: 100%;
  }

  .badge {
    bottom: 2px;
    position: absolute;
    right: 26px;
  }

  .side {
    padding-top: 0;
  }

  .side .thumb {
    height: 562px;
    margin-top: 53px;
  }

  footer {
    align-items: center;
    background: #f0eeed;
    display: flex;
    height: 26px;
    padding-left: 6px;
  }

  footer span {
    line-height: 22px;
    white-space: pre;
  }

  footer span + span {
    border-left: 1px solid #555;
    margin-left: 6px;
    padding-left: 7px;
  }
</style>
